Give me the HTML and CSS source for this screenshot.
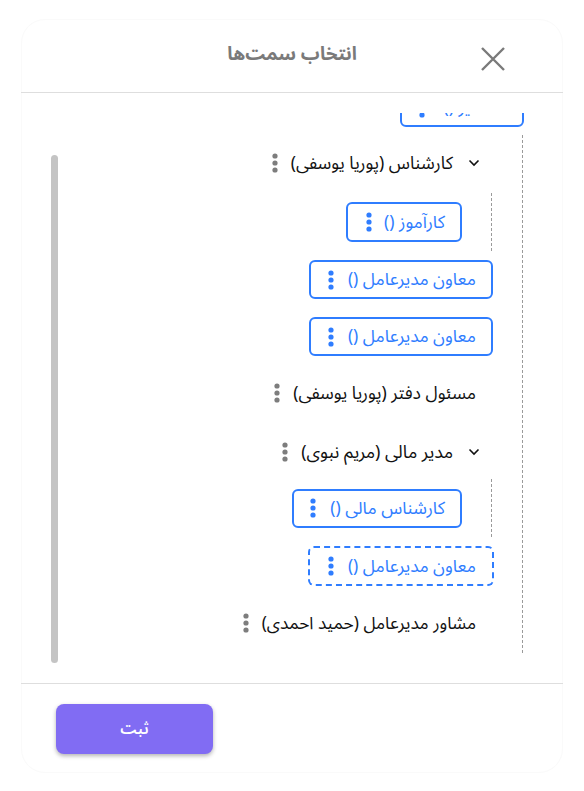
FILE: index.html
```html
<!DOCTYPE html>
<html lang="fa" dir="rtl">
<head>
<meta charset="utf-8">
<title>انتخاب سمت‌ها</title>
<link rel="stylesheet" href="styles.css">
</head>
<body>
<section class="modal">
  <header class="modal-head">
    <h1 class="modal-title">انتخاب سمت‌ها</h1>
    <svg class="close" width="26" height="26" viewBox="0 0 26 26"><path d="M2 2 L24 24 M24 2 L2 24" stroke="#7a7a7a" stroke-width="2.4" fill="none"/></svg>
  </header>
  <div class="modal-body">
    <div class="scrollbar"></div>
    <div class="tree">
      <div class="tree-scroll">
        <div class="chip chip-top">
          <span class="chip-label">مدیر ()</span>
          <svg class="dots" width="6" height="20" viewBox="0 0 6 20"><circle cx="3" cy="3" r="2.6"/><circle cx="3" cy="10" r="2.6"/><circle cx="3" cy="17" r="2.6"/></svg>
        </div>
        <div class="row row-1">
          <svg class="chev" width="12" height="8" viewBox="0 0 12 8"><path d="M1.5 1.5 L6 6 L10.5 1.5" fill="none" stroke="#111" stroke-width="1.6"/></svg>
          <span class="row-label">کارشناس (پوریا یوسفی)</span>
          <svg class="dots grey" width="6" height="20" viewBox="0 0 6 20"><circle cx="3" cy="3" r="2.6"/><circle cx="3" cy="10" r="2.6"/><circle cx="3" cy="17" r="2.6"/></svg>
        </div>
        <div class="sub sub-1">
          <div class="chip chip-a">
            <span class="chip-label">کارآموز ()</span>
            <svg class="dots" width="6" height="20" viewBox="0 0 6 20"><circle cx="3" cy="3" r="2.6"/><circle cx="3" cy="10" r="2.6"/><circle cx="3" cy="17" r="2.6"/></svg>
          </div>
        </div>
        <div class="chip chip-b">
          <span class="chip-label">معاون مدیرعامل ()</span>
          <svg class="dots" width="6" height="20" viewBox="0 0 6 20"><circle cx="3" cy="3" r="2.6"/><circle cx="3" cy="10" r="2.6"/><circle cx="3" cy="17" r="2.6"/></svg>
        </div>
        <div class="chip chip-c">
          <span class="chip-label">معاون مدیرعامل ()</span>
          <svg class="dots" width="6" height="20" viewBox="0 0 6 20"><circle cx="3" cy="3" r="2.6"/><circle cx="3" cy="10" r="2.6"/><circle cx="3" cy="17" r="2.6"/></svg>
        </div>
        <div class="row row-2">
          <span class="row-label">مسئول دفتر (پوریا یوسفی)</span>
          <svg class="dots grey" width="6" height="20" viewBox="0 0 6 20"><circle cx="3" cy="3" r="2.6"/><circle cx="3" cy="10" r="2.6"/><circle cx="3" cy="17" r="2.6"/></svg>
        </div>
        <div class="row row-3">
          <svg class="chev" width="12" height="8" viewBox="0 0 12 8"><path d="M1.5 1.5 L6 6 L10.5 1.5" fill="none" stroke="#111" stroke-width="1.6"/></svg>
          <span class="row-label">مدیر مالی (مریم نبوی)</span>
          <svg class="dots grey" width="6" height="20" viewBox="0 0 6 20"><circle cx="3" cy="3" r="2.6"/><circle cx="3" cy="10" r="2.6"/><circle cx="3" cy="17" r="2.6"/></svg>
        </div>
        <div class="sub sub-2">
          <div class="chip chip-d">
            <span class="chip-label">کارشناس مالی ()</span>
            <svg class="dots" width="6" height="20" viewBox="0 0 6 20"><circle cx="3" cy="3" r="2.6"/><circle cx="3" cy="10" r="2.6"/><circle cx="3" cy="17" r="2.6"/></svg>
          </div>
        </div>
        <div class="chip chip-e">
          <span class="chip-label">معاون مدیرعامل ()</span>
          <svg class="dots" width="6" height="20" viewBox="0 0 6 20"><circle cx="3" cy="3" r="2.6"/><circle cx="3" cy="10" r="2.6"/><circle cx="3" cy="17" r="2.6"/></svg>
        </div>
        <div class="row row-4">
          <span class="row-label">مشاور مدیرعامل (حمید احمدی)</span>
          <svg class="dots grey" width="6" height="20" viewBox="0 0 6 20"><circle cx="3" cy="3" r="2.6"/><circle cx="3" cy="10" r="2.6"/><circle cx="3" cy="17" r="2.6"/></svg>
        </div>
      </div>
    </div>
  </div>
  <footer class="modal-foot">
    <button class="submit" type="button">ثبت</button>
  </footer>
</section>
</body>
</html>
```
FILE: styles.css
```css
* { box-sizing: border-box; }
html, body { margin: 0; height: 100%; background: #fff; }
body {
  padding: 19px 21px 18px 21px;
  font-family: "Noto Sans Arabic", "Vazirmatn", "Noto Sans", "DejaVu Sans", sans-serif;
  overflow: hidden;
}
.modal {
  width: 542px;
  height: 754px;
  border-radius: 24px;
  border: 1px solid #fafafa;
  display: flex;
  flex-direction: column;
  background: #fff;
}
.modal-head {
  height: 73px;
  flex: none;
  border-bottom: 1px solid #dedede;
  margin: 0 -1px;
  position: relative;
  display: flex;
  justify-content: center;
}
.modal-title {
  margin: 21px 0 0;
  font-size: 18.7px;
  line-height: 26px;
  font-weight: 700;
  color: #7a7a7a;
}
.close { position: absolute; left: 459px; top: 26px; }
.modal-body {
  flex: 1;
  position: relative;
  min-height: 0;
}
.scrollbar {
  position: absolute;
  left: 29px;
  top: 62px;
  width: 7px;
  height: 508px;
  border-radius: 4px;
  background: #c4c4c4;
}
.tree {
  height: 100%;
  padding-top: 20px;
}
.tree-scroll {
  height: 540px;
  overflow: hidden;
  position: relative;
  padding-right: 38px;
}
.tree-scroll::before {
  content: "";
  position: absolute;
  right: 39px;
  top: 22px;
  height: 518px;
  border-right: 1px dashed #9a9a9a;
}
.row {
  display: flex;
  align-items: center;
  height: 24px;
  font-size: 17.5px;
  color: #111;
}
.row-label { white-space: nowrap; }
.chev { margin: 0 44px 0 15px; flex: none; }
.dots { fill: #2f7dff; flex: none; }
.dots.grey { fill: #7d7d7d; }
.row .dots { margin-right: 13px; }
.row-2, .row-4 { padding-right: 48px; }
.chip {
  display: flex;
  align-items: center;
  height: 39px;
  border: 2px solid #2f7dff;
  border-radius: 6px;
  padding: 0 15px 0 0;
  color: #2f7dff;
  font-size: 17.4px;
}
.chip-label { white-space: nowrap; }
.chip .dots { margin-right: 14px; }
.chip-top { margin-top: -25px; width: 124px; padding-right: 33px; }
.chip-top .dots { margin-right: 19px; }
.row-1 { margin-top: 24px; }
.sub { margin-right: 32px; border-right: 1px dashed #9a9a9a; padding-right: 29px; height: 58px; display: flex; align-items: center; }
.sub-1 { margin-top: 18px; }
.chip-a { height: 40px; width: 116px; }
.chip-a .dots { margin-right: 12px; }
.chip-b { margin: 9px 31px 0 0; width: 184px; }
.chip-c { margin: 18px 31px 0 0; width: 184px; }
.row-2 { margin-top: 25px; }
.row-3 { margin-top: 35px; font-size: 17.8px; }
.sub-2 { margin-top: 15px; }
.chip-d { width: 170px; }
.chip-e { margin: 9px 30px 0 0; border-style: dashed; height: 40px; width: 186px; padding-right: 16px; }
.row-4 { margin-top: 25px; font-size: 17.3px; }
.modal-foot {
  height: 89px;
  flex: none;
  border-top: 1px solid #dedede;
  margin: 0 -1px;
  position: relative;
}
.submit {
  position: absolute;
  left: 35px;
  top: 20px;
  width: 157px;
  height: 50px;
  border: 0;
  border-radius: 8px;
  background: #816cf3;
  color: #fff;
  font: 600 15.5px "Noto Sans Arabic", "Noto Sans", "DejaVu Sans", sans-serif;
  box-shadow: 0 2px 4px rgba(0,0,0,.3);
}
```
